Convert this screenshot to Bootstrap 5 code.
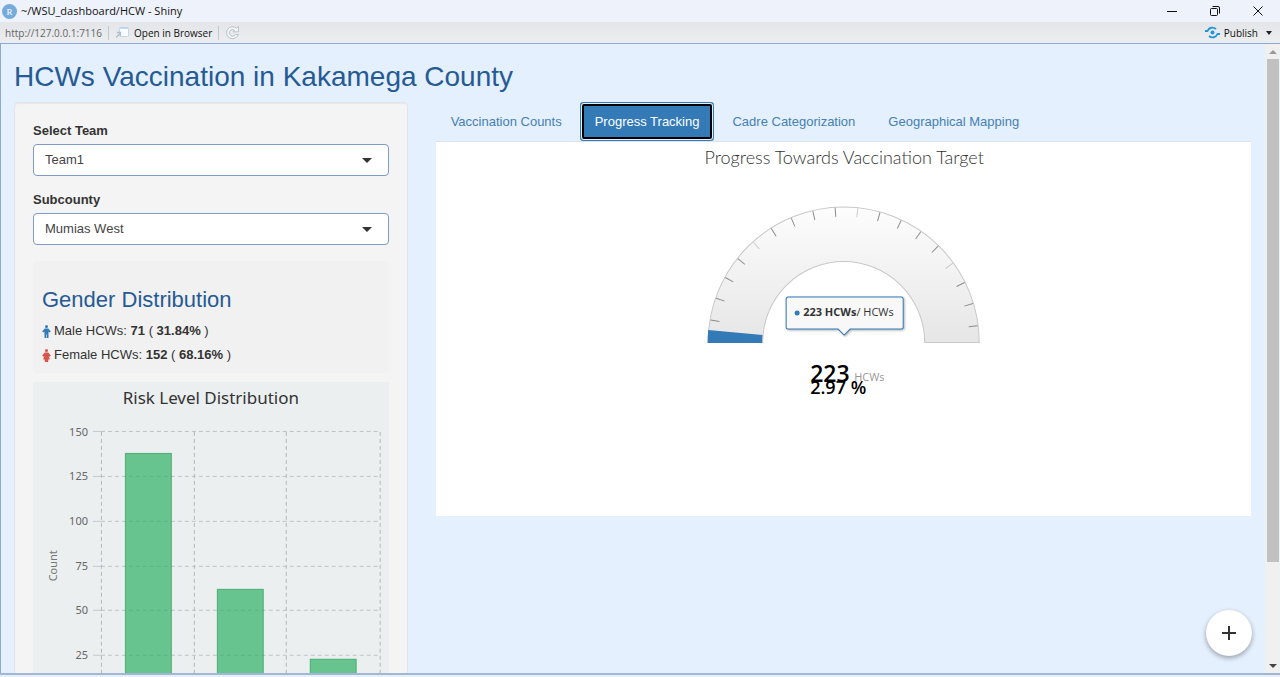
<!DOCTYPE html>
<html lang="en">
<head>
<meta charset="utf-8">
<meta name="viewport" content="width=device-width, initial-scale=1">
<title>~/WSU_dashboard/HCW - Shiny</title>
<link href="https://cdn.jsdelivr.net/npm/bootstrap@5.3.0/dist/css/bootstrap.min.css" rel="stylesheet">
<style>
  body { font: 13px/18px "Liberation Sans", Arial, sans-serif; color: #333; background: #e4f0fe; }
  .chrome-text { font-family: "Open Sans", "Noto Sans", sans-serif; font-size: 11px; line-height: 16px; }
  .title-bar { height: 22px; background: #eef3fb; color: #111; padding-left: 2px; }
  .title-bar button, .tool-bar button { border: 0; background: none; padding: 0; color: inherit; }
  .window-buttons { gap: 31px; padding-right: 16px; }
  .tool-bar { height: 21px; background: linear-gradient(#e3e5e8, #eceef0); color: #111; padding-left: 5px; }
  .tool-bar .address { color: #666; }
  .tool-bar .address, .tool-bar button { font-size: 10px; }
  .divider { width: 1px; height: 14px; background: #c4c8ce; margin: 0 6px; }
  .viewer { border: solid #8ea9d6; border-width: 1px 0 2px; border-bottom-color: #a3b6d3; margin-bottom: 2px; min-height: 0; }
  .page-body { overflow: hidden; min-width: 0; box-shadow: inset 1px 0 #8ea9d6; }
  .gutter { --bs-gutter-x: 28px; }
  .app-title { font-size: 28px; line-height: 32px; color: #265a94; margin: 17px 0 9px; font-weight: 400; }
  .side-well { background: #f4f4f4; border: 1px solid #e0e5ea; border-radius: 4px; padding: 19px 18px 18px; box-shadow: inset 0 1px 1px rgba(0,0,0,.05); }
  .field { margin-bottom: 15px; }
  .field label { font-weight: 700; margin-bottom: 4px; display: block; }
  .field .form-select { height: 32px; padding: 6px 11px; font-size: 13px; line-height: 18px; color: #444; border: 1px solid #7f9bc8; border-radius: 4px;
    background: #fff url("data:image/svg+xml,%3Csvg xmlns='http://www.w3.org/2000/svg' viewBox='0 0 10 5'%3E%3Cpath d='M0 0h10L5 5z' fill='%23333'/%3E%3C/svg%3E") no-repeat right 16px top 13px / 10px 5px; }
  .gender-box { background: #f1f1f1; border-radius: 4px; margin: 16px 0 9px; padding: 27px 9px 6px; }
  .gender-box h2 { font-size: 22px; line-height: 24px; margin: 0 0 7px; color: #265a94; font-weight: 400; }
  .gender-box p { margin: 0; line-height: 24px; gap: 3px; }
  .risk-chart { background: #ebeff0; font-family: "Noto Sans", "Open Sans", sans-serif; }
  .main-tabs { border-bottom: 1px solid #dde3ea; gap: 3px; }
  .main-tabs .nav-link { padding: 11px 15px 10px; line-height: 18px; border: 0; border-radius: 4px 4px 0 0; color: #4680b3; margin: 0; }
  .main-tabs .nav-link.active { background: #337ab7; color: #fff; border-radius: 4px; box-shadow: inset 0 0 0 1px #337ab7, inset 0 0 0 2px #e4f0fe, inset 0 0 0 4px #000; }
  .chart-panel { background: #fff; font-family: "Open Sans", "Noto Sans", sans-serif; }
  .scroll-track { width: 15px; background: #f0f0f0; }
  .scroll-thumb { width: 12px; height: 80%; background: #c1c1c1; }
  .add-button { width: 46px; height: 46px; right: 28px; bottom: 17px; border: 0; background: #fff; box-shadow: 0 2px 5px rgba(0,0,0,.35); }
</style>
</head>
<body class="vh-100 d-flex flex-column overflow-hidden">
<header class="chrome-text">
  <div class="title-bar d-flex align-items-center">
    <svg width="15" height="15" class="me-1" viewBox="0 0 15 15"><circle cx="7.500" cy="7.500" r="7.500" fill="#75aadb"/><text x="7.500" y="11" font-size="9" text-anchor="middle" fill="#fff" font-family="Liberation Serif, serif">R</text></svg>
    <span>~/WSU_dashboard/HCW - Shiny</span>
    <div class="window-buttons ms-auto d-flex">
      <button type="button" class="d-flex" aria-label="Minimize"><svg width="12" height="12"><path d="M1 6.500h10" stroke="#111"/></svg></button>
      <button type="button" class="d-flex" aria-label="Restore"><svg width="12" height="12" fill="none" stroke="#111"><rect x="1.500" y="3.500" width="7" height="7" rx="1"/><path d="M3.500 1.500h5.500q1.500 0 1.500 1.500v5.500"/></svg></button>
      <button type="button" class="d-flex" aria-label="Close"><svg width="12" height="12"><path d="M1.500 1.500l9 9M10.500 1.500l-9 9" stroke="#111"/></svg></button>
    </div>
  </div>
  <div class="tool-bar d-flex align-items-center">
    <span class="address">http://127.0.0.1:7116</span>
    <span class="divider"></span>
    <button type="button" class="d-flex align-items-center gap-1"><svg width="15" height="13" viewBox="0 0 15 13"><rect x="4.500" y="1.500" width="9" height="9" rx="1" fill="#f8fbff" stroke="#c3d7ec"/><path d="M5 2h8" stroke="#b3d0ee" stroke-width="1.500"/><path d="M1 11.500l4-4M2 6.500h3.500V10" fill="none" stroke="#b3bdc9" stroke-width="1.300"/></svg>Open in Browser</button>
    <span class="divider"></span>
    <button type="button" class="d-flex" aria-label="Reload"><svg width="15" height="15" viewBox="0 0 15 15" fill="none"><path d="M11.500 3.200A6 6 0 1 0 13.300 9.500H10.500A3.300 3.300 0 1 1 9.500 5.200L8 6.800H13.500V1.200z" fill="#f3f5f7" stroke="#bcc3cb"/></svg></button>
    <button type="button" class="ms-auto me-1 d-flex align-items-center gap-1"><svg width="15" height="13" viewBox="0 0 15 13" fill="none" stroke="#2196d8" stroke-width="1.800"><circle cx="7.500" cy="6.500" r="2" fill="#2196d8" stroke="none"/><path d="M0 5h2.500C4 1.500 8 .5 11 3M15 8h-2.500C11 11.500 7 12.500 4 10"/></svg>Publish<svg class="ms-1 me-1" width="6" height="4"><path d="M0 0h6L3 4z" fill="#222"/></svg></button>
  </div>
</header>
<div class="viewer flex-grow-1 d-flex position-relative">
  <div class="page-body flex-grow-1">
    <div class="container-fluid gutter">
      <h1 class="app-title">HCWs Vaccination in Kakamega County</h1>
      <div class="row gutter">
        <aside class="col-4">
          <form class="side-well">
            <div class="field"><label for="team">Select Team</label><select id="team" class="form-select"><option>Team1</option></select></div>
            <div class="field"><label for="subcounty">Subcounty</label><select id="subcounty" class="form-select"><option>Mumias West</option></select></div>
            <section class="gender-box">
              <h2>Gender Distribution</h2>
              <p class="d-flex align-items-center"><svg width="9" height="13" viewBox="0 0 9 13" fill="#337ab7"><circle cx="4.500" cy="1.500" r="1.500"/><path d="M2.700 3.400h3.600l2.500 3-1.200 1.200L6.500 6.500V13H4.800V9.500h-.6V13H2.500V6.500L1.400 7.600.2 6.400z"/></svg><span>Male HCWs: <b>71</b> ( <b>31.84%</b> )</span></p>
              <p class="d-flex align-items-center"><svg width="9" height="13" viewBox="0 0 9 13" fill="#d9534f"><circle cx="4.500" cy="1.500" r="1.500"/><path d="M2.700 3.400h3.600l2.500 3.200-1.200 1.100L6.700 6.900l1.200 3.600H6.200V13H2.800v-2.500H1.100l1.200-3.600-.9.800L.2 6.600z"/></svg><span>Female HCWs: <b>152</b> ( <b>68.16%</b> )</span></p>
            </section>
            <svg class="risk-chart d-block w-100" viewBox="0 0 356 372" role="img" aria-label="Risk Level Distribution">
              <text x="178" y="22" text-anchor="middle" font-size="17" fill="#333">Risk Level Distribution</text>
              <g stroke="#bdc3c7" stroke-dasharray="4 3"><path d="M68 49.500h280M68 94.500h280M68 139.500h280M68 184.500h280M68 228.500h280M68 273.500h280"/><path d="M68.500 50v269M161.500 50v269M253.500 50v269M347.500 50v269" stroke="#b3b8bc"/></g>
              <path d="M60 49.500h8M60 94.500h8M60 139.500h8M60 184.500h8M60 228.500h8M60 273.500h8" stroke="#c4cacd"/>
              <g fill="#27ae60" fill-opacity=".67" stroke="#27a05a" stroke-opacity=".7"><rect x="92.500" y="71.500" width="46" height="247"/><rect x="184.500" y="207.500" width="46" height="111"/><rect x="277.500" y="277.500" width="46" height="41"/></g>
              <g font-size="11" fill="#666" text-anchor="end"><text x="55" y="54">150</text><text x="55" y="98">125</text><text x="55" y="143">100</text><text x="55" y="188">75</text><text x="55" y="232">50</text><text x="55" y="277">25</text></g>
              <text transform="translate(24 184) rotate(-90)" text-anchor="middle" font-size="11" fill="#777">Count</text>
            </svg>
          </form>
        </aside>
        <main class="col-8">
          <ul class="nav main-tabs">
            <li class="nav-item"><a class="nav-link" href="#">Vaccination Counts</a></li>
            <li class="nav-item"><a class="nav-link active" aria-current="page" href="#">Progress Tracking</a></li>
            <li class="nav-item"><a class="nav-link" href="#">Cadre Categorization</a></li>
            <li class="nav-item"><a class="nav-link" href="#">Geographical Mapping</a></li>
          </ul>
          <svg class="chart-panel d-block w-100" viewBox="0 0 815 374" role="img" aria-label="Progress Towards Vaccination Target">
            <defs>
              <linearGradient id="dial" x1="0" y1="0" x2="0" y2="1"><stop offset="0" stop-color="#fdfdfd"/><stop offset="1" stop-color="#e6e6e6"/></linearGradient>
              <path id="tick" d="M-135 0h9"/>
            </defs>
            <text x="408" y="22" text-anchor="middle" font-size="18" fill="#333" font-family="Lato, sans-serif" font-weight="300">Progress Towards Vaccination Target</text>
            <g transform="translate(407.500 200.500)">
              <path d="M-135.500 0A135.500 135.500 0 0 1 135.500 0H81A81 81 0 0 0 -81 0z" fill="url(#dial)" stroke="#c8c8c8"/>
              <g stroke="#8c8c8c">
                <use href="#tick" transform="rotate(9.600)"/><use href="#tick" transform="rotate(19.200)"/><use href="#tick" transform="rotate(28.800)"/><use href="#tick" transform="rotate(38.400)"/>
                <use href="#tick" transform="rotate(57.600)"/><use href="#tick" transform="rotate(67.200)"/><use href="#tick" transform="rotate(76.800)"/><use href="#tick" transform="rotate(86.400)"/>
                <use href="#tick" transform="rotate(105.600)"/><use href="#tick" transform="rotate(115.200)"/><use href="#tick" transform="rotate(124.800)"/><use href="#tick" transform="rotate(134.400)"/>
                <use href="#tick" transform="rotate(153.600)"/><use href="#tick" transform="rotate(163.200)"/><use href="#tick" transform="rotate(172.800)"/>
              </g>
              <g stroke="#ccc"><use href="#tick" transform="rotate(48)"/><use href="#tick" transform="rotate(96)"/><use href="#tick" transform="rotate(144)"/></g>
              <path d="M-136 0.500A136 136 0 0 1 -135.400 -12.600L-81.100 -7.600A81.500 81.500 0 0 0 -81.500 0.500z" fill="#337ab7"/>
            </g>
            <g font-weight="600" fill="#000"><text x="374" y="240" font-size="23">223</text><text x="374" y="252" font-size="18">2.97 %</text></g>
            <text x="418" y="239" font-size="11" fill="#999">HCWs</text>
            <path d="M352 155h113q2 0 2 2v28q0 2-2 2H414l-6 6-6-6H352q-2 0-2-2v-28q0-2 2-2z" fill="#f8f8f8" stroke="#337ab7" style="filter:drop-shadow(1px 1px 1px rgba(0,0,0,.3))"/>
            <circle cx="361" cy="171" r="2.500" fill="#337ab7"/>
            <text x="367" y="174" font-size="11" fill="#333"><tspan font-weight="700">223 HCWs</tspan>/ HCWs</text>
          </svg>
        </main>
      </div>
    </div>
  </div>
  <div class="scroll-track d-flex flex-column align-items-center flex-shrink-0" aria-hidden="true">
    <svg width="8" height="15"><path d="M0 10h8L4 6z" fill="#999"/></svg>
    <div class="scroll-thumb"></div>
    <svg class="mt-auto" width="8" height="12"><path d="M0 3h8L4 7z" fill="#444"/></svg>
  </div>
  <button type="button" class="add-button rounded-circle position-absolute d-flex align-items-center justify-content-center p-0" aria-label="Add"><svg width="14" height="14"><path d="M7 0v14M0 7h14" stroke="#333" stroke-width="2"/></svg></button>
</div>
<script src="https://cdn.jsdelivr.net/npm/bootstrap@5.3.0/dist/js/bootstrap.bundle.min.js"></script>
</body>
</html>
